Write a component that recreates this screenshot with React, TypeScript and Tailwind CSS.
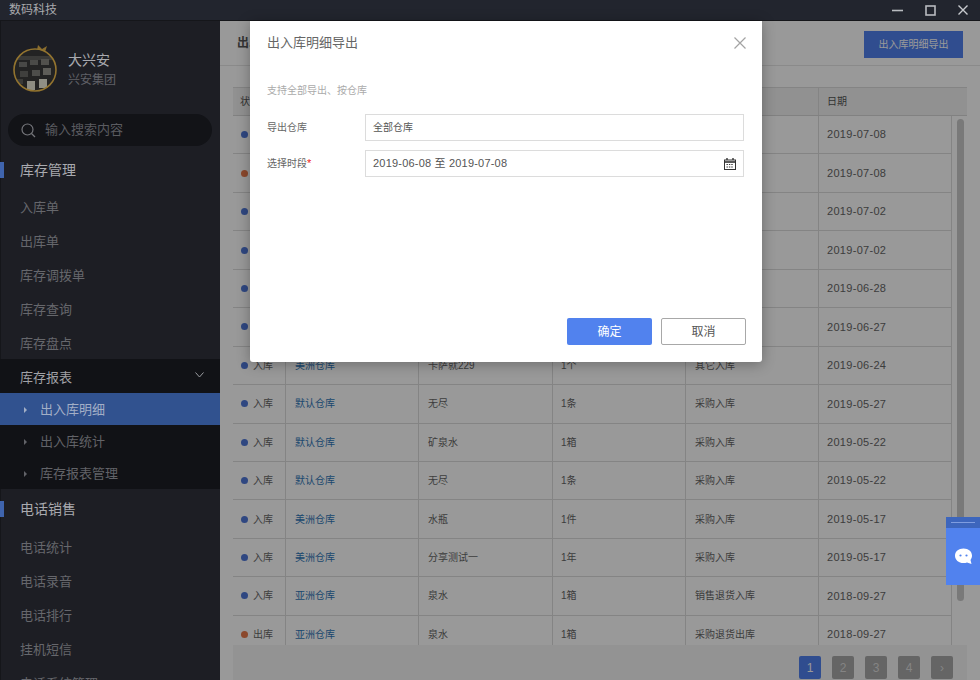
import React from "react";

const font = { fontFamily: '"Liberation Sans", "Noto Sans CJK SC", sans-serif' };

type Row = { s: string; w: string; n: string; q: string; t: string; d: string };
const rows: Row[] = [
  { s: "入库", w: "默认仓库", n: "无尽", q: "1条", t: "采购入库", d: "2019-07-08" },
  { s: "出库", w: "默认仓库", n: "无尽", q: "1条", t: "采购退货出库", d: "2019-07-08" },
  { s: "入库", w: "美洲仓库", n: "水瓶", q: "1件", t: "采购入库", d: "2019-07-02" },
  { s: "入库", w: "美洲仓库", n: "水瓶", q: "1件", t: "采购入库", d: "2019-07-02" },
  { s: "入库", w: "默认仓库", n: "矿泉水", q: "1箱", t: "采购入库", d: "2019-06-28" },
  { s: "入库", w: "默认仓库", n: "矿泉水", q: "1箱", t: "采购入库", d: "2019-06-27" },
  { s: "入库", w: "美洲仓库", n: "卡萨就229", q: "1个", t: "其它入库", d: "2019-06-24" },
  { s: "入库", w: "默认仓库", n: "无尽", q: "1条", t: "采购入库", d: "2019-05-27" },
  { s: "入库", w: "默认仓库", n: "矿泉水", q: "1箱", t: "采购入库", d: "2019-05-22" },
  { s: "入库", w: "默认仓库", n: "无尽", q: "1条", t: "采购入库", d: "2019-05-22" },
  { s: "入库", w: "美洲仓库", n: "水瓶", q: "1件", t: "采购入库", d: "2019-05-17" },
  { s: "入库", w: "美洲仓库", n: "分享测试一", q: "1年", t: "采购入库", d: "2019-05-17" },
  { s: "入库", w: "亚洲仓库", n: "泉水", q: "1箱", t: "销售退货入库", d: "2018-09-27" },
  { s: "出库", w: "亚洲仓库", n: "泉水", q: "1箱", t: "采购退货出库", d: "2018-09-27" },
];

const gridCols = "grid grid-cols-[52px_133px_134px_133px_133px_133px]";

function Avatar() {
  return (
    <svg width="46" height="48" viewBox="0 0 46 48" className="shrink-0">
      <defs>
        <clipPath id="av">
          <circle cx="23" cy="26" r="21" />
        </clipPath>
      </defs>
      <path d="M25 6 L26 1 L30 5 L35 2 L33 8 Z" fill="#8a6d2e" />
      <g clipPath="url(#av)">
        <rect x="0" y="0" width="46" height="48" fill="#232323" />
        <rect x="4" y="12" width="38" height="4" fill="#3a3a38" />
        <rect x="7" y="18" width="8" height="5" fill="#484846" />
        <rect x="18" y="16" width="8" height="5" fill="#4a4a47" />
        <rect x="29" y="15" width="8" height="6" fill="#52514d" />
        <rect x="8" y="27" width="8" height="6" fill="#3f3f3d" />
        <rect x="20" y="26" width="8" height="6" fill="#4d4d4a" />
        <rect x="31" y="24" width="8" height="7" fill="#5e5d58" />
        <rect x="15" y="37" width="8" height="9" fill="#8d8c82" />
        <rect x="27" y="35" width="8" height="9" fill="#8f8e84" />
        <rect x="4" y="35" width="7" height="5" fill="#3a3a38" />
      </g>
      <circle cx="23" cy="26" r="21" fill="none" stroke="#93742f" strokeWidth="1.6" />
    </svg>
  );
}

function SectionTitle({ children }: { children: React.ReactNode }) {
  return (
    <div className="relative h-4 flex items-center pl-5 text-[14px] text-[#a9aaaf]">
      <span className="absolute left-0 top-0 w-1 h-4 bg-[#3f64ad]" />
      {children}
    </div>
  );
}

function NavItem({ children }: { children: React.ReactNode }) {
  return <div className="h-[34px] pt-[4px] flex items-center pl-5 text-[13px] text-[#66676c]">{children}</div>;
}

function SubItem({ children, active }: { children: React.ReactNode; active?: boolean }) {
  return (
    <div className={`h-8 pt-[2px] flex items-center pl-6 gap-[13px] text-[13px] ${active ? "bg-[#31528f] text-[#a3afc6]" : "text-[#626368]"}`}>
      <span className={`w-0 h-0 border-y-[3px] border-y-transparent border-l-[3px] ${active ? "border-l-[#a3afc6]" : "border-l-[#626368]"}`} />
      {children}
    </div>
  );
}

function Sidebar() {
  return (
    <aside className="w-[220px] shrink-0 bg-[#1d1e24] shadow-[inset_1px_0_0_#15161a] overflow-hidden">
      <div className="flex items-center gap-[10px] pl-3 pt-[23px]">
        <Avatar />
        <div className="flex flex-col mt-1">
          <span className="text-[14px] leading-5 text-[#a9aaaf]">大兴安</span>
          <span className="text-[12px] leading-5 text-[#606167]">兴安集团</span>
        </div>
      </div>
      <div className="mx-2 mt-[22px] h-8 rounded-full bg-[#121317] flex items-center pl-[13px] gap-[9px] text-[13px] text-[#5a5b60]">
        <svg width="15" height="15" viewBox="0 0 15 15" fill="none" stroke="#75767b" strokeWidth="1.2">
          <circle cx="6.5" cy="6.5" r="5.5" />
          <path d="M10.5 10.5 L14 14" />
        </svg>
        输入搜索内容
      </div>
      <div className="mt-4">
        <SectionTitle>库存管理</SectionTitle>
      </div>
      <div className="mt-[11px]">
        <NavItem>入库单</NavItem>
        <NavItem>出库单</NavItem>
        <NavItem>库存调拨单</NavItem>
        <NavItem>库存查询</NavItem>
        <NavItem>库存盘点</NavItem>
      </div>
      <div className="bg-[#111216]">
        <div className="h-[34px] pt-[4px] flex items-center justify-between pl-5 pr-4 text-[13px] text-[#a0a1a6]">
          库存报表
          <svg width="9" height="6" viewBox="0 0 9 6" fill="none" stroke="#9a9ba0" strokeWidth="1" className="mb-[7px]">
            <path d="M0.5 0.5 L4.5 5 L8.5 0.5" />
          </svg>
        </div>
        <SubItem active>出入库明细</SubItem>
        <SubItem>出入库统计</SubItem>
        <SubItem>库存报表管理</SubItem>
      </div>
      <div className="mt-3">
        <SectionTitle>电话销售</SectionTitle>
      </div>
      <div className="mt-[12px]">
        <NavItem>电话统计</NavItem>
        <NavItem>电话录音</NavItem>
        <NavItem>电话排行</NavItem>
        <NavItem>挂机短信</NavItem>
        <NavItem>电话系统管理</NavItem>
      </div>
    </aside>
  );
}

function Table() {
  return (
    <div className="mx-[13px] mt-[21px] flex-1 min-h-0 flex flex-col">
      <div className="flex-1 min-h-0 overflow-hidden flex border-t border-[#dcdcdc]">
        <div className="w-[718px] shrink-0">
          <div className={`${gridCols} h-[28px] bg-[#f2f2f2] text-[10px] text-[#555] border-b border-[#d8d8d8]`}>
            {["状态", "仓库", "商品", "数量", "类型", "日期"].map((h, i) => (
              <div key={h} className={`flex items-center px-[8px] ${i > 0 ? "border-l border-[#dcdcdc]" : "pl-[7px]"}`}>
                {h}
              </div>
            ))}
          </div>
          {rows.map((r, i) => (
            <div key={i} className={`${gridCols} h-[38.45px] text-[10px] text-[#666] border-b border-[#dcdcdc]`}>
              <div className="flex items-center pl-2 gap-[5px]">
                <span className={`w-[7px] h-[7px] rounded-full ${r.s === "入库" ? "bg-[#4f77d8]" : "bg-[#e8794a]"}`} />
                {r.s}
              </div>
              <div className="flex items-center pl-[9px] border-l border-[#dcdcdc] text-[#2f77b8]">{r.w}</div>
              <div className="flex items-center pl-[9px] border-l border-[#dcdcdc]">{r.n}</div>
              <div className="flex items-center pl-[8px] border-l border-[#dcdcdc]">{r.q}</div>
              <div className="flex items-center pl-[9px] border-l border-[#dcdcdc]">{r.t}</div>
              <div className="flex items-center pl-[8px] border-l border-[#dcdcdc] text-[11px] tracking-[0.3px]">{r.d}</div>
            </div>
          ))}
        </div>
        <div className="w-4 shrink-0 flex flex-col">
          <div className="h-[28px] shrink-0 bg-[#f2f2f2] border-b border-[#d8d8d8]" />
          <div className="flex-1 border-l border-[#dcdcdc] pt-[3px] pl-[5px]">
            <div className="w-[7px] h-[482px] rounded-full bg-[#cacaca]" />
          </div>
        </div>
      </div>
      <div className="h-[35px] shrink-0 bg-[#f6f6f6] flex items-start justify-end gap-[11px] pt-[11px] pr-[14px] text-[12px] text-white">
        <span className="w-[22px] h-[23px] rounded-[2px] bg-[#5180ee] flex items-center justify-center">1</span>
        {["2", "3", "4", "›"].map((p) => (
          <span key={p} className="w-[22px] h-[23px] rounded-[2px] bg-[#a8a8a8] flex items-center justify-center text-[#dcdcdc]">
            {p}
          </span>
        ))}
      </div>
    </div>
  );
}

function Main() {
  return (
    <main className="relative flex-1 min-w-0 bg-white flex flex-col overflow-hidden">
      <div className="h-[45px] shrink-0 flex items-center justify-between pl-[17px] pr-[17px] border-b border-[#e6e6e6] text-[12px] font-bold text-[#555]">
        出入库明细
        <span className="w-[99px] h-[27px] mt-[2px] bg-[#5180ee] flex items-center justify-center text-[10px] font-normal text-white">
          出入库明细导出
        </span>
      </div>
      <Table />
      <div className="absolute inset-0 bg-black/40" />
    </main>
  );
}

function Modal() {
  return (
    <div className="absolute left-[250px] top-[21px] w-[512px] h-[341px] bg-white rounded-b-[3px] shadow-[0_2px_14px_rgba(0,0,0,0.3)] flex flex-col pl-[17px] pr-[18px]">
      <div className="flex items-center justify-between h-[44px] text-[13px] text-[#666]">
        出入库明细导出
        <svg width="12" height="12" viewBox="0 0 12 12" stroke="#a3a3a3" strokeWidth="1.2" className="mr-[-2px]">
          <path d="M0.5 0.5 L11.5 11.5 M11.5 0.5 L0.5 11.5" />
        </svg>
      </div>
      <div className="mt-[18px] h-[15px] leading-[15px] text-[10px] text-[#aaa]">支持全部导出、按仓库</div>
      <div className="mt-[16px] flex items-center text-[10px] text-[#666]">
        <span className="w-[98px]">导出仓库</span>
        <div className="w-[379px] h-[27px] border border-[#dcdcdc] flex items-center pl-[7px] text-[#555]">全部仓库</div>
      </div>
      <div className="mt-[9px] flex items-center text-[10px] text-[#666]">
        <span className="w-[98px]">
          选择时段<span className="text-[#f01818] text-[11px]">*</span>
        </span>
        <div className="w-[379px] h-[27px] border border-[#dcdcdc] flex items-center justify-between pl-[7px] pr-[7px] text-[11px] tracking-[0.2px] text-[#555]">
          2019-06-08 至 2019-07-08
          <svg width="12" height="12" viewBox="0 0 12 12" fill="none" stroke="#333" strokeWidth="1">
            <rect x="0.5" y="2" width="11" height="9.5" />
            <path d="M0.5 4 H11.5" strokeWidth="1.6" />
            <path d="M3 0 V2 M9 0 V2" strokeWidth="1.4" />
            <path d="M2.5 6.5 H9.5 M2.5 9 H9.5" strokeDasharray="1.4 1" />
          </svg>
        </div>
      </div>
      <div className="mt-[141px] flex justify-end gap-[9px] mr-[-2px] text-[12px]">
        <span className="w-[85px] h-[27px] rounded-[2px] bg-[#5182ee] text-white flex items-center justify-center">确定</span>
        <span className="w-[85px] h-[27px] rounded-[2px] border border-[#a8a8a8] text-[#555] flex items-center justify-center">取消</span>
      </div>
    </div>
  );
}

function ChatWidget() {
  return (
    <div className="absolute right-0 top-[517px] w-[34px] h-[68px] bg-[#5182ee] flex flex-col">
      <div className="h-[11px] bg-[#3d66bd] flex items-center justify-center">
        <span className="w-[24px] h-px bg-[#7f9de0]" />
      </div>
      <div className="flex-1 flex items-center justify-center">
        <svg width="19" height="17" viewBox="0 0 19 17">
          <path d="M9.5 0.5 C14.5 0.5 18 3.6 18 7.6 C18 9.6 17.3 11 16.5 12 L17.5 16 L13 14.4 C12 14.7 10.8 15 9.5 15 C4.5 15 1 11.7 1 7.7 C1 3.6 4.5 0.5 9.5 0.5 Z" fill="#fff" />
          <circle cx="6.5" cy="7.5" r="1.1" fill="#5182ee" />
          <circle cx="12.5" cy="7.5" r="1.1" fill="#5182ee" />
        </svg>
      </div>
    </div>
  );
}

export default function App() {
  return (
    <div style={font} className="relative w-[980px] h-[680px] overflow-hidden flex flex-col">
      <header className="h-[21px] shrink-0 bg-[#22252e] border-b border-[#15161a] flex items-center justify-between pl-[9px] pr-3 text-[12px] text-[#a8a9ad]">
        数码科技
        <div className="flex items-center gap-[22px]">
          <svg width="11" height="11" viewBox="0 0 11 11" stroke="#b9bbc0" strokeWidth="1.6" fill="none">
            <path d="M0 5.5 H11" />
          </svg>
          <svg width="11" height="11" viewBox="0 0 11 11" stroke="#b9bbc0" strokeWidth="1.6" fill="none">
            <rect x="1" y="1" width="9" height="9" />
          </svg>
          <svg width="10" height="10" viewBox="0 0 10 10" stroke="#c8cace" strokeWidth="1.4" fill="none">
            <path d="M0.5 0.5 L9.5 9.5 M9.5 0.5 L0.5 9.5" />
          </svg>
        </div>
      </header>
      <div className="flex-1 min-h-0 flex">
        <Sidebar />
        <Main />
      </div>
      <Modal />
      <ChatWidget />
    </div>
  );
}
